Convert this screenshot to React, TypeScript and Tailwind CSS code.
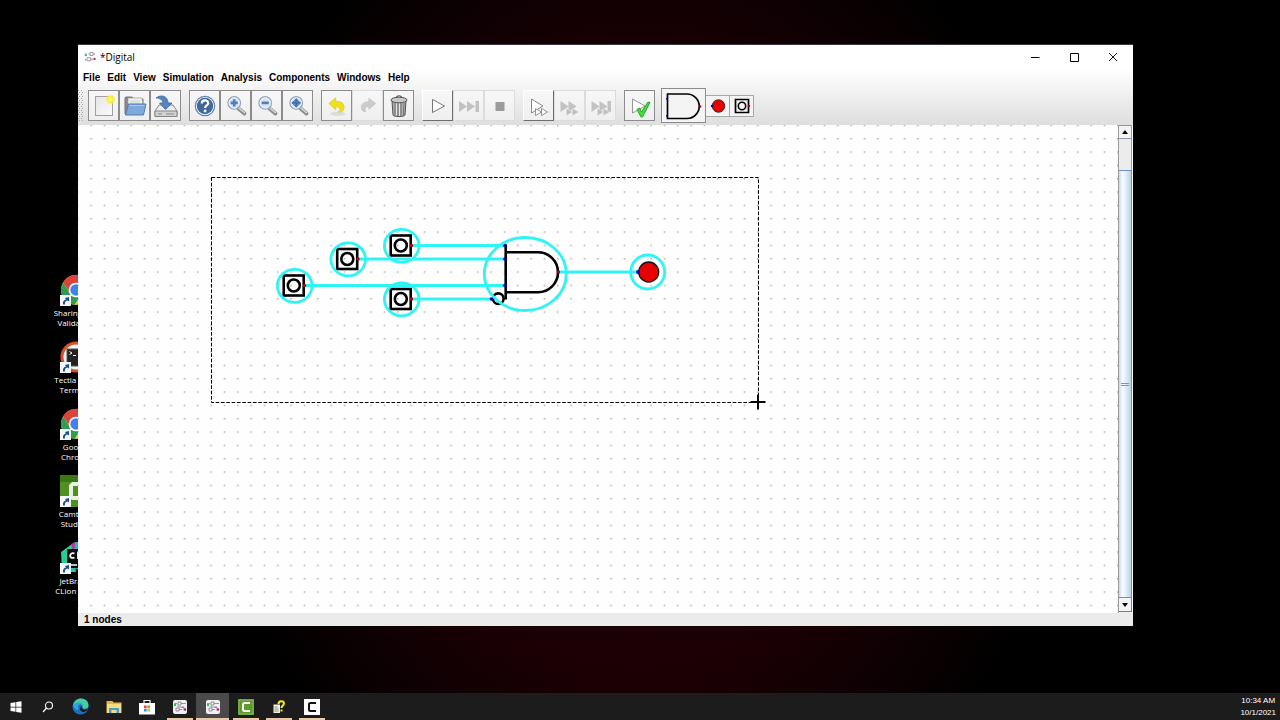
import type { ReactNode } from 'react';
import clsx from 'clsx';

const menus = ['File', 'Edit', 'View', 'Simulation', 'Analysis', 'Components', 'Windows', 'Help'];

type Look = 'normal' | 'raised' | 'disabled';

interface Tool {
  label: string;
  icon: ReactNode;
  look?: Look;
}

function NewIcon() {
  return (
    <svg viewBox="0 0 24 24" className="size-6">
      <defs>
        <linearGradient id="page" x1="0" y1="0" x2="1" y2="1">
          <stop offset="0" stopColor="#e4e4e4" />
          <stop offset="1" stopColor="#fbfbfb" />
        </linearGradient>
        <radialGradient id="sun">
          <stop offset="0" stopColor="#fffd60" />
          <stop offset="0.6" stopColor="#f8ee3c" />
          <stop offset="1" stopColor="#f8f060" stopOpacity="0.3" />
        </radialGradient>
      </defs>
      <rect x="3.500" y="2.500" width="17" height="19" fill="url(#page)" stroke="#a0a0a0" />
      <circle cx="18.500" cy="5.500" r="5" fill="url(#sun)" />
    </svg>
  );
}

function OpenIcon() {
  return (
    <svg viewBox="0 0 24 24" className="size-6">
      <path d="M2 20V4l1-1h6l2 2h9v15z" fill="#8a8a8a" stroke="#777" />
      <path d="M5 4h14l1 8H5z" fill="#f4f4f4" stroke="#999" strokeWidth="0.7" />
      <path d="M7 7h10M7 9h10" stroke="#bbb" strokeWidth="0.7" />
      <path d="M2.500 21 5.500 10h17.500l-2.500 11z" fill="#7ea9da" stroke="#4f7db5" />
      <path d="M6.500 11.500h15" stroke="#a9c9ec" />
    </svg>
  );
}

function SaveIcon() {
  return (
    <svg viewBox="0 0 24 24" className="size-6">
      <path d="M5 11h14l4 6v5.500H1V17z" fill="#ececec" stroke="#888" />
      <path d="M1 17h22v5.500H1z" fill="#d2d2d2" stroke="#858585" />
      <path d="M12 20h8M4 20h4" stroke="#8a8a8a" />
      <path d="M2 4c5-4 12-2 12 5h4l-6.500 6.500L5.500 9H9c0-3-3-5-7-5z" fill="#5785bd" stroke="#3c659f" strokeWidth="0.8" />
    </svg>
  );
}

function HelpIcon() {
  return (
    <svg viewBox="0 0 24 24" className="size-6">
      <circle cx="12" cy="12" r="9.700" fill="#fff" stroke="#6483ab" strokeWidth="1.200" />
      <circle cx="12" cy="12" r="8.200" fill="#41699c" />
      <path d="M8.800 9.500c0-4 6.400-4 6.400-.3 0 2.300-3.100 2.300-3.100 4.800" fill="none" stroke="#fff" strokeWidth="2.200" />
      <circle cx="12.100" cy="17" r="1.400" fill="#fff" />
    </svg>
  );
}

function ZoomIcon({ kind }: { kind: 'in' | 'out' | 'fit' }) {
  return (
    <svg viewBox="-2 -1 27 27" className="size-6">
      <path d="m14 15 7 6" stroke="#8a8a8a" strokeWidth="4.500" strokeLinecap="round" />
      <path d="m14.500 14.500 6.500 5.500" stroke="#cfcfcf" strokeWidth="2" strokeLinecap="round" />
      <circle cx="9.500" cy="9" r="7" fill="#d5e3f4" stroke="#93a5bd" strokeWidth="1.600" />
      <circle cx="9.500" cy="9" r="5.800" fill="none" stroke="#f7fafd" strokeWidth="1" />
      {kind === 'in' && <path d="M9.500 5v8M5.500 9h8" stroke="#527fbb" strokeWidth="3" />}
      {kind === 'out' && <path d="M5.500 9h8" stroke="#527fbb" strokeWidth="3" />}
      {kind === 'fit' && (
        <path d="m9.500 4 2 2.500h-1V8h1.500V7l2.500 2-2.500 2v-1h-1.500v1.500h1l-2 2.500-2-2.500h1V10H7v1L4.500 9 7 7v1h1.500V6.500h-1z" fill="#4272b3" stroke="#4272b3" />
      )}
    </svg>
  );
}

function UndoIcon() {
  return (
    <svg viewBox="-2 -2 28 28" className="size-6">
      <ellipse cx="13" cy="21" rx="9" ry="2.500" fill="#dcdcdc" />
      <path d="m2.500 9 8-6.500v4c8 0 11 4 9.500 9-1 3-4 4-6.500 3.500 3-2 3-6-3-6v3.500z" fill="#efe01c" stroke="#d8c41a" strokeWidth="0.7" />
    </svg>
  );
}

function RedoIcon() {
  return (
    <svg viewBox="-2 -2 28 28" className="size-6">
      <path d="m21 9-8-6v4C6 7 3 11 4.500 16c1 2 3 3 5 2.500-2-2.500-1-6 3.500-6V16z" fill="#cbcbcb" stroke="#bfbfbf" strokeWidth="0.700" />
    </svg>
  );
}

function TrashIcon() {
  return (
    <svg viewBox="0 0 24 24" className="size-6">
      <path d="M5 7h14l-1 14c0 2-12 2-12 0z" fill="#b0b0b0" stroke="#555" />
      <path d="M8 9v12M11 9v13M14 9v13M17 9l-.5 12" stroke="#6a6a6a" strokeWidth="0.900" />
      <path d="M9.500 9v12M12.500 9v13" stroke="#ececec" strokeWidth="0.900" />
      <ellipse cx="12" cy="6" rx="8" ry="2.800" fill="#c8c8c8" stroke="#555" />
      <path d="M9.500 4c0-3 5-3 5 0" fill="none" stroke="#555" strokeWidth="1.200" />
    </svg>
  );
}

function PlayIcon() {
  return (
    <svg viewBox="0 0 24 24" className="size-6">
      <path d="M6.500 5.500v13L18.500 12z" fill="#fff" stroke="#666" strokeWidth="0.900" />
    </svg>
  );
}

function SkipIcon() {
  return (
    <svg viewBox="0 0 24 24" className="size-6">
      <path d="M2 7v11l8-5.500zM10 7v11l8-5.500zM18.500 7H22v11h-3.500z" fill="#c2c2c2" />
    </svg>
  );
}

function StopIcon() {
  return (
    <svg viewBox="0 0 24 24" className="size-6">
      <path d="M7.500 8h9v9h-9z" fill="#9c9c9c" />
    </svg>
  );
}

function StepIcon() {
  return (
    <svg viewBox="0 0 24 24" className="size-6">
      <path d="M4.500 5v14L16 12z" fill="#fff" stroke="#777" strokeWidth="0.900" />
      <path d="M8.500 14.500v7l6-3.500zM14.500 14.500v7l6-3.500z" fill="#fff" stroke="#888" strokeWidth="0.900" />
    </svg>
  );
}

function FastStepIcon({ bar = false }: { bar?: boolean }) {
  return (
    <svg viewBox="0 0 24 24" className="size-6">
      <path d="M2.500 7v11l8-5.500zM10.500 7v11l8-5.500z" fill="#c2c2c2" />
      {bar && <path d="M18.500 7H22v11h-3.500z" fill="#c2c2c2" />}
      <path d="M8.500 14.500v7l6-3.500zM14.500 14.500v7l6-3.500z" fill="#bdbdbd" stroke="#e4e4e4" strokeWidth="0.600" />
    </svg>
  );
}

function CheckIcon() {
  return (
    <svg viewBox="0 0 24 24" className="size-6">
      <path d="M4.500 5v14L17 12z" fill="#fff" stroke="#888" strokeWidth="0.900" />
      <path d="m9 15.500 2.500-1.500 2 4L20 8l2 .5L14.500 23h-1.500z" fill="#3de03d" stroke="#1ea01e" strokeWidth="0.900" />
    </svg>
  );
}

const toolGroups: Tool[][] = [
  [
    { label: 'New', icon: <NewIcon /> },
    { label: 'Open', icon: <OpenIcon /> },
    { label: 'Save', icon: <SaveIcon /> },
  ],
  [
    { label: 'Help', icon: <HelpIcon /> },
    { label: 'Zoom in', icon: <ZoomIcon kind="in" /> },
    { label: 'Zoom out', icon: <ZoomIcon kind="out" /> },
    { label: 'Fit to window', icon: <ZoomIcon kind="fit" /> },
  ],
  [
    { label: 'Undo', icon: <UndoIcon /> },
    { label: 'Redo', icon: <RedoIcon />, look: 'disabled' },
    { label: 'Delete', icon: <TrashIcon /> },
  ],
  [
    { label: 'Start simulation', icon: <PlayIcon />, look: 'raised' },
    { label: 'Run to break', icon: <SkipIcon />, look: 'disabled' },
    { label: 'Stop simulation', icon: <StopIcon />, look: 'disabled' },
  ],
  [
    { label: 'Single gate stepping', icon: <StepIcon />, look: 'raised' },
    { label: 'Gate step', icon: <FastStepIcon />, look: 'disabled' },
    { label: 'Run to break in steps', icon: <FastStepIcon bar />, look: 'disabled' },
  ],
  [{ label: 'Run tests', icon: <CheckIcon /> }],
];

function ToolButton({ label, icon, look = 'normal' }: Tool) {
  return (
    <button
      type="button"
      aria-label={label}
      disabled={look === 'disabled'}
      className={clsx(
        'flex size-[31px] items-center justify-center border bg-gradient-to-b from-[#f7f7f7] to-[#efefef]',
        look === 'normal' && 'border-[#8c8c8c]',
        look === 'raised' && 'border-r-[#6e6e6e] border-b-[#6e6e6e] border-t-white border-l-white',
        look === 'disabled' && 'border-[#dcdcdc]',
      )}
    >
      {icon}
    </button>
  );
}

function LogoIcon() {
  return (
    <svg viewBox="0 0 16 16" className="h-3 w-3">
      <path d="M1 4h3M8 2h4v4H8zM12 4h3M4 9h5v4H4zM9 11h3M6 4h2" fill="none" stroke="#9a8f96" strokeWidth="1.200" />
      <circle cx="2.500" cy="5.500" r="1.500" fill="#37c35a" />
      <circle cx="2" cy="11.500" r="1" fill="#7f9c86" />
      <circle cx="14" cy="10.500" r="1.600" fill="#b03050" />
    </svg>
  );
}

function Toolbar() {
  return (
    <div className="flex h-[38px] items-center pb-px">
      <svg className="mr-1 h-8 w-1.5 shrink-0">
        <defs>
          <pattern id="grip" width="3" height="4" patternUnits="userSpaceOnUse">
            <path d="M0 0h1v1H0zM1 2h1v1H1z" fill="#a8a8a8" />
          </pattern>
        </defs>
        <rect width="6" height="32" fill="url(#grip)" />
      </svg>
      <div className="flex gap-2">
        {toolGroups.map((group) => (
          <div key={group[0].label} className="flex">
            {group.map((tool) => (
              <ToolButton key={tool.label} {...tool} />
            ))}
          </div>
        ))}
      </div>
      <div className="ml-1.5 flex items-center">
        <button type="button" aria-label="Insert And" className="flex h-[35px] w-[45px] items-center justify-center border border-[#8c8c8c] bg-[#f4f4f4]">
          <svg viewBox="0 0 40 30" className="h-[30px] w-10">
            <path d="M3.500 3H23a12 12 0 0 1 0 24.500H3.500z" fill="none" stroke="#000" strokeWidth="1.700" />
            <path d="M2 7h2v1.500H2zM2 24h2v1.500H2z" fill="#0000b0" />
            <circle cx="36" cy="15.500" r="1.300" fill="#a00020" />
          </svg>
        </button>
        <button type="button" aria-label="Insert LED" className="flex h-[22px] w-6 items-center justify-center border border-l-0 border-[#a8a8a8] bg-[#f4f4f4]">
          <svg viewBox="0 0 20 20" className="size-5">
            <circle cx="10.500" cy="10" r="6.300" fill="#e60000" stroke="#222" strokeWidth="0.800" />
            <circle cx="4" cy="10" r="1.200" fill="#0000b0" />
          </svg>
        </button>
        <button type="button" aria-label="Insert Input" className="flex h-[22px] w-6 items-center justify-center border border-l-0 border-[#a8a8a8] bg-[#f4f4f4]">
          <svg viewBox="0 0 20 20" className="size-5">
            <path d="M3.500 3.500h13v13h-13z" fill="none" stroke="#000" strokeWidth="1.700" />
            <circle cx="10" cy="10" r="3.700" fill="none" stroke="#000" strokeWidth="1.600" />
            <circle cx="17" cy="10" r="1.200" fill="#b00020" />
          </svg>
        </button>
      </div>
    </div>
  );
}

const inputs = [
  { x: 216, y: 160.5, end: 427 },
  { x: 269.5, y: 134, end: 427 },
  { x: 323, y: 120.5, end: 427 },
  { x: 323, y: 174, end: 413 },
];

function Circuit() {
  return (
    <svg className="min-w-0 flex-1 cursor-crosshair bg-[#fefefe]">
      <defs>
        <pattern id="dots" x="12.400" y="-0.300" width="13.333" height="13.333" patternUnits="userSpaceOnUse">
          <rect width="1.400" height="1.400" fill="#a4a4a4" />
        </pattern>
      </defs>
      <rect width="100%" height="100%" fill="url(#dots)" />
      <g fill="none" stroke="#2ff4f5" strokeWidth="2.800">
        {inputs.map(({ x, y, end }) => (
          <path key={`${x}-${y}`} d={`M${x + 11} ${y}H${end}`} />
        ))}
        <path d="M480 147h80" />
      </g>
      {inputs.map(({ x, y }) => (
        <g key={`${x}-${y}`} fill="none" stroke="#000" strokeWidth="2.600">
          <rect x={x - 10.3} y={y - 10} width="20" height="20" />
          <circle cx={x - 0.2} cy={y} r="6" />
          <circle cx={x + 10.5} cy={y} r="1.700" fill="#c00000" stroke="none" />
        </g>
      ))}
      <g fill="none" stroke="#000" strokeWidth="2.600">
        <path d="M427.700 119.500v55M427.700 127.300H460a20 20 0 0 1 0 40H427.700" />
        <circle cx="420.300" cy="173.700" r="5.300" />
      </g>
      <g fill="#0000b8">
        <circle cx="427" cy="120.500" r="1.800" />
        <circle cx="427" cy="134" r="1.800" />
        <circle cx="427" cy="160.500" r="1.800" />
        <circle cx="413.500" cy="174" r="1.800" />
      </g>
      <circle cx="480.300" cy="147" r="1.800" fill="#a00028" />
      <circle cx="570.700" cy="147" r="10" fill="#e60000" stroke="#111" strokeWidth="1.300" />
      <circle cx="560" cy="147" r="1.900" fill="#0000b8" />
      {/* highlight rings of the selected parts */}
      <g fill="none" stroke="#2ff4f5" strokeWidth="2.800">
        {inputs.map(({ x, y }) => (
          <ellipse key={`${x}-${y}`} cx={x + 0.7} cy={y + 0.3} rx="17.300" ry="16.500" />
        ))}
        <ellipse cx="447.300" cy="149" rx="41" ry="36.500" />
        <circle cx="569.700" cy="147" r="17" />
      </g>
      <rect x="133.500" y="52.500" width="547" height="225" fill="none" stroke="#000" strokeDasharray="3.700 1.630" />
      <path d="M680 269.500v15M672.500 277h15" stroke="#000" strokeWidth="2" />
    </svg>
  );
}

function ScrollBar() {
  return (
    <div className="mr-px flex w-3.5 flex-col border-l border-[#9a9a9a] bg-[#ececec]">
      <button type="button" aria-label="Scroll up" className="flex h-3.5 items-center justify-center border-y border-r border-[#8a97ab] bg-[#f3f3f3]">
        <svg viewBox="0 0 6 4" className="h-1 w-1.5">
          <path d="M0 4h6L3 0z" />
        </svg>
      </button>
      <div className="h-[31px] border-r border-[#9a9a9a]" />
      <div className="flex flex-1 flex-col items-center justify-center gap-px border border-l-0 border-[#6f8fc0] bg-gradient-to-r from-[#c3d9f0] via-[#fbfdff] via-30% to-[#b9d2ec]">
        <span className="h-px w-2 bg-[#7f96b5]" />
        <span className="h-px w-2 bg-[#7f96b5]" />
      </div>
      <button type="button" aria-label="Scroll down" className="mb-px flex h-3.5 items-center justify-center border-r border-b border-[#7a7a7a] bg-[#f3f3f3]">
        <svg viewBox="0 0 6 4" className="h-1 w-1.5">
          <path d="M0 0h6L3 4z" />
        </svg>
      </button>
    </div>
  );
}

function DigitalWindow() {
  return (
    <main className="absolute top-[44px] right-[147px] bottom-[67px] left-[78px] flex flex-col border-t border-[#3a3a40] bg-white font-['Liberation_Sans',sans-serif] text-[10px] text-black">
      <header className="flex h-6 shrink-0 items-center pr-px pl-1.5">
        <LogoIcon />
        <h1 className="ml-1 flex-1 font-['Open_Sans',sans-serif]">*Digital</h1>
        <button type="button" aria-label="Minimize" className="flex h-6 w-[39px] items-center justify-center">
          <svg viewBox="0 0 10 10" className="size-2.5">
            <path d="M1 5.500h8.500" stroke="#000" />
          </svg>
        </button>
        <button type="button" aria-label="Maximize" className="flex h-6 w-[39px] items-center justify-center">
          <svg viewBox="0 0 10 10" className="size-2.5">
            <path d="M1.500 1.500h8v8h-8z" fill="none" stroke="#000" />
          </svg>
        </button>
        <button type="button" aria-label="Close" className="flex h-6 w-[39px] items-center justify-center">
          <svg viewBox="0 0 10 10" className="size-2.5">
            <path d="m1 1 8 8M9 1 1 9" stroke="#000" strokeWidth="0.900" />
          </svg>
        </button>
      </header>
      <div className="shrink-0 bg-gradient-to-b from-white to-[#dedede]">
        <nav className="flex h-[18px] items-center gap-[7px] pb-0.5 pl-[5px] font-bold">
          {menus.map((menu) => (
            <button key={menu} type="button">
              {menu}
            </button>
          ))}
        </nav>
        <Toolbar />
      </div>
      <div className="flex min-h-0 flex-1">
        <Circuit />
        <ScrollBar />
      </div>
      <footer className="h-[13px] shrink-0 bg-[#ebebeb] pl-1.5 leading-[13px] font-bold">1 nodes</footer>
    </main>
  );
}

function ChromeIcon() {
  return (
    <svg viewBox="0 0 32 32" className="size-8">
      <circle cx="16" cy="16" r="15" fill="#f6c934" />
      <path d="M3 8.500A15 15 0 0 1 29.500 9H16a7 7 0 0 0-6.500 9z" fill="#d9453c" />
      <path d="M3 8.500A15 15 0 0 0 14.500 31L20 22a7 7 0 0 1-10-2.500z" fill="#2f9e55" />
      <circle cx="16" cy="16" r="7.300" fill="#fff" />
      <circle cx="16" cy="16" r="5.700" fill="#3f82ee" />
    </svg>
  );
}

function TectiaIcon() {
  return (
    <svg viewBox="0 0 32 32" className="size-8">
      <circle cx="16" cy="16" r="14" fill="#f2f2f2" stroke="#d9512c" strokeWidth="3" />
      <rect x="7" y="8" width="20" height="17" fill="#222" stroke="#555" />
      <path d="m9.500 10.500 2.500 1.500-2.500 1.500M13 14.500h3" fill="none" stroke="#fff" />
    </svg>
  );
}

function CamtasiaIcon() {
  return (
    <svg viewBox="0 0 32 32" className="size-8">
      <path d="M0 0h32v32H0z" fill="#4f8f23" />
      <path d="M0 0h32v7H0z" fill="#3b7717" />
      <path d="M27 7H12l-3 3v12l3 3h15v-4H13V11h14z" fill="#e8f2df" />
    </svg>
  );
}

function ClionIcon() {
  return (
    <svg viewBox="0 0 32 32" className="size-8">
      <path d="M1 10 12 2l4 28H2z" fill="#22cf96" />
      <path d="m11 2 4-2 8 8-10 2z" fill="#d42a9a" />
      <path d="M15 0h10l6 14-4 16-14-4z" fill="#15b7d8" />
      <path d="M7 7h19v19H7z" fill="#0a0a0a" />
      <path d="M14.500 11.500c-5-2.500-6.500 6.500 0 4M18 9.500V16h5" fill="none" stroke="#fff" strokeWidth="1.800" />
      <path d="M10 23h7" stroke="#fff" strokeWidth="1.500" />
    </svg>
  );
}

const shortcuts = [
  { icon: <ChromeIcon />, lines: ['Sharing and', 'Validation'] },
  { icon: <TectiaIcon />, lines: ['Tectia - SSH', 'Terminal'] },
  { icon: <ChromeIcon />, lines: ['Google', 'Chrome'] },
  { icon: <CamtasiaIcon />, lines: ['Camtasia', 'Studio 9'] },
  { icon: <ClionIcon />, lines: ['JetBrains', 'CLion 2021'] },
];

function Shortcut({ icon, lines }: (typeof shortcuts)[number]) {
  return (
    <button type="button" className="flex h-[67px] w-[60px] flex-col items-center text-center text-[8px] leading-[10px] text-white">
      <span className="relative mb-0.5 block">
        {icon}
        <svg viewBox="0 0 11 11" className="absolute bottom-0 left-0 size-[11px]">
          <path d="M0 0h11v11H0z" fill="#f4f6f8" />
          <path d="M3 9.500c-.5-3 1-4.500 3-5L5 3l4-1v4.500L7.500 5.500C5.500 6 4.500 7 5 9.500z" fill="#1f4f8f" />
        </svg>
      </span>
      {lines.map((line) => (
        <span key={line} className="whitespace-nowrap">
          {line}
        </span>
      ))}
    </button>
  );
}

function EdgeIcon() {
  return (
    <svg viewBox="0 0 18 18" className="size-[17px]">
      <circle cx="9" cy="9" r="8.500" fill="#1d6fc4" />
      <path d="M1 8C2 3 6 .5 9.500.5c5 0 8 3.500 8 7 0 3-2.500 4-5 4-1.500 0-2-1-1.500-2C12 6 6 3.500 1 8z" fill="#43cfa0" />
      <path d="M1 8c3-4 9-4 10.500-1C8 6 6 8 6.500 11S3 13 1 8z" fill="#2aa6dd" />
      <path d="M11 9c-1 2 1 4.500 6 2.500-.5 2-3.500 4-6 3-3.500-1-3.500-6 0-5.500z" fill="#1d1d1d" />
    </svg>
  );
}

function FolderIcon() {
  return (
    <svg viewBox="0 0 16 14" className="h-3.5 w-4">
      <path d="M.5 1h6l1 1.500h8V13H.5z" fill="#e8b640" />
      <path d="M1 4h14v9H1z" fill="#fbdc7c" />
      <path d="M3 8h10v5H3z" fill="#3f9ee0" />
      <path d="M5.500 10h5v3h-5z" fill="#fbdc7c" />
    </svg>
  );
}

function StoreIcon() {
  return (
    <svg viewBox="0 0 16 16" className="size-4">
      <path d="M5 4V1.500h6V4" fill="none" stroke="#fff" strokeWidth="1.200" />
      <path d="M0 4h16v11.500H0z" fill="#fff" />
      <path d="M5 6.500h2.700v2.700H5z" fill="#e8502c" />
      <path d="M8.300 6.500H11v2.700H8.300z" fill="#7cb82f" />
      <path d="M5 9.800h2.700v2.700H5z" fill="#2a9de0" />
      <path d="M8.300 9.800H11v2.700H8.300z" fill="#f3b61f" />
    </svg>
  );
}

function DigitalTaskIcon() {
  return (
    <svg viewBox="0 0 14 14" className="size-3.5">
      <rect width="14" height="14" rx="2" fill="#f2eff2" />
      <path d="M1 3.500h3M5 2h3v3H5zM8 3.500h5M3 8h3v3H3zM6 9.500h3M8.500 7.500H11v3M5 5.500v1.500h6" fill="none" stroke="#857a8e" strokeWidth="0.800" />
      <circle cx="2" cy="5" r="1.200" fill="#2cc04c" />
      <circle cx="12" cy="9.500" r="1.200" fill="#b0204c" />
    </svg>
  );
}

function RecorderIcon({ light = false }: { light?: boolean }) {
  return (
    <svg viewBox="0 0 16 16" className="size-4">
      <path d="M0 0h16v16H0z" fill={light ? '#fff' : '#5f9a2c'} />
      {!light && <path d="M1 1h14v14H1z" fill="none" stroke="#86b95a" />}
      <path d="M12 4H6.500Q5 4 5 5.500v5Q5 12 6.500 12H12" fill="none" stroke={light ? '#111' : '#fff'} strokeWidth="2" />
    </svg>
  );
}

function QuestionTaskIcon() {
  return (
    <svg viewBox="0 0 14 14" className="size-3.5">
      <path d="M1.500 4.500H8V13H1.500z" fill="#f1f1dc" />
      <path d="M2.500 7h3M2.500 9h4M2.500 11h4" stroke="#777" strokeWidth="0.800" />
      <path d="M6.500 4c0-4 5.500-3.500 5.500-.5C12 5.500 9.500 5.500 9.500 8" fill="none" stroke="#f0ee20" strokeWidth="2" />
      <path d="M8.500 9.500h2v2h-2z" fill="#f0ee20" />
    </svg>
  );
}

const tasks = [
  { label: 'Edge', icon: <EdgeIcon />, open: false },
  { label: 'File Explorer', icon: <FolderIcon />, open: false },
  { label: 'Store', icon: <StoreIcon />, open: false },
  { label: 'Digital', icon: <DigitalTaskIcon />, open: true },
  { label: 'Digital editor', icon: <DigitalTaskIcon />, open: true, active: true },
  { label: 'Camtasia', icon: <RecorderIcon />, open: true },
  { label: 'Help viewer', icon: <QuestionTaskIcon />, open: true },
  { label: 'Recorder', icon: <RecorderIcon light />, open: true },
];

function Taskbar() {
  return (
    <footer className="flex h-[27px] shrink-0 items-stretch bg-[#1c1c1c] text-white">
      <button type="button" aria-label="Start" className="flex w-8 items-center justify-center">
        <svg viewBox="0 0 12 12" className="size-3">
          <path d="M.5 2 5.500 1.200v4.500h-5zM6.200 1.100 11.500.3v5.400H6.200zM.5 6.400h5v4.400l-5-.8zM6.200 6.400h5.300v5.300l-5.300-.8z" fill="#fff" />
        </svg>
      </button>
      <button type="button" aria-label="Search" className="flex w-8 items-center justify-center">
        <svg viewBox="0 0 12 12" className="size-3">
          <circle cx="7" cy="4.500" r="3.500" fill="none" stroke="#fff" strokeWidth="1.100" />
          <path d="M4.500 7 1 11" stroke="#fff" strokeWidth="1.200" />
        </svg>
      </button>
      {tasks.map(({ label, icon, open, active }) => (
        <button
          key={label}
          type="button"
          aria-label={label}
          className={clsx('flex w-[33px] flex-col items-center', active && 'bg-[#4a4a4a]')}
        >
          <span className="flex flex-1 items-center pt-0.5">{icon}</span>
          <span className={clsx('h-0.5', active ? 'w-full' : 'w-[26px]', open && 'bg-[#ecc9a6]')} />
        </button>
      ))}
      <div className="ml-auto flex flex-col justify-center pr-1 text-center font-['Liberation_Sans',sans-serif] text-[8px] leading-3">
        <span>10:34 AM</span>
        <span>10/1/2021</span>
      </div>
    </footer>
  );
}

export default function App() {
  return (
    <div className="flex h-screen flex-col overflow-hidden bg-black font-['Open_Sans',sans-serif]">
      <div className="relative min-h-0 flex-1 bg-[radial-gradient(ellipse_440px_520px_at_50%_54%,#24000a,#1a0005_60%,#000)]">
        <div className="flex flex-col pt-[274px] pl-[46px]">
          {shortcuts.map((shortcut) => (
            <Shortcut key={shortcut.lines.join(' ')} {...shortcut} />
          ))}
        </div>
        <DigitalWindow />
      </div>
      <Taskbar />
    </div>
  );
}
